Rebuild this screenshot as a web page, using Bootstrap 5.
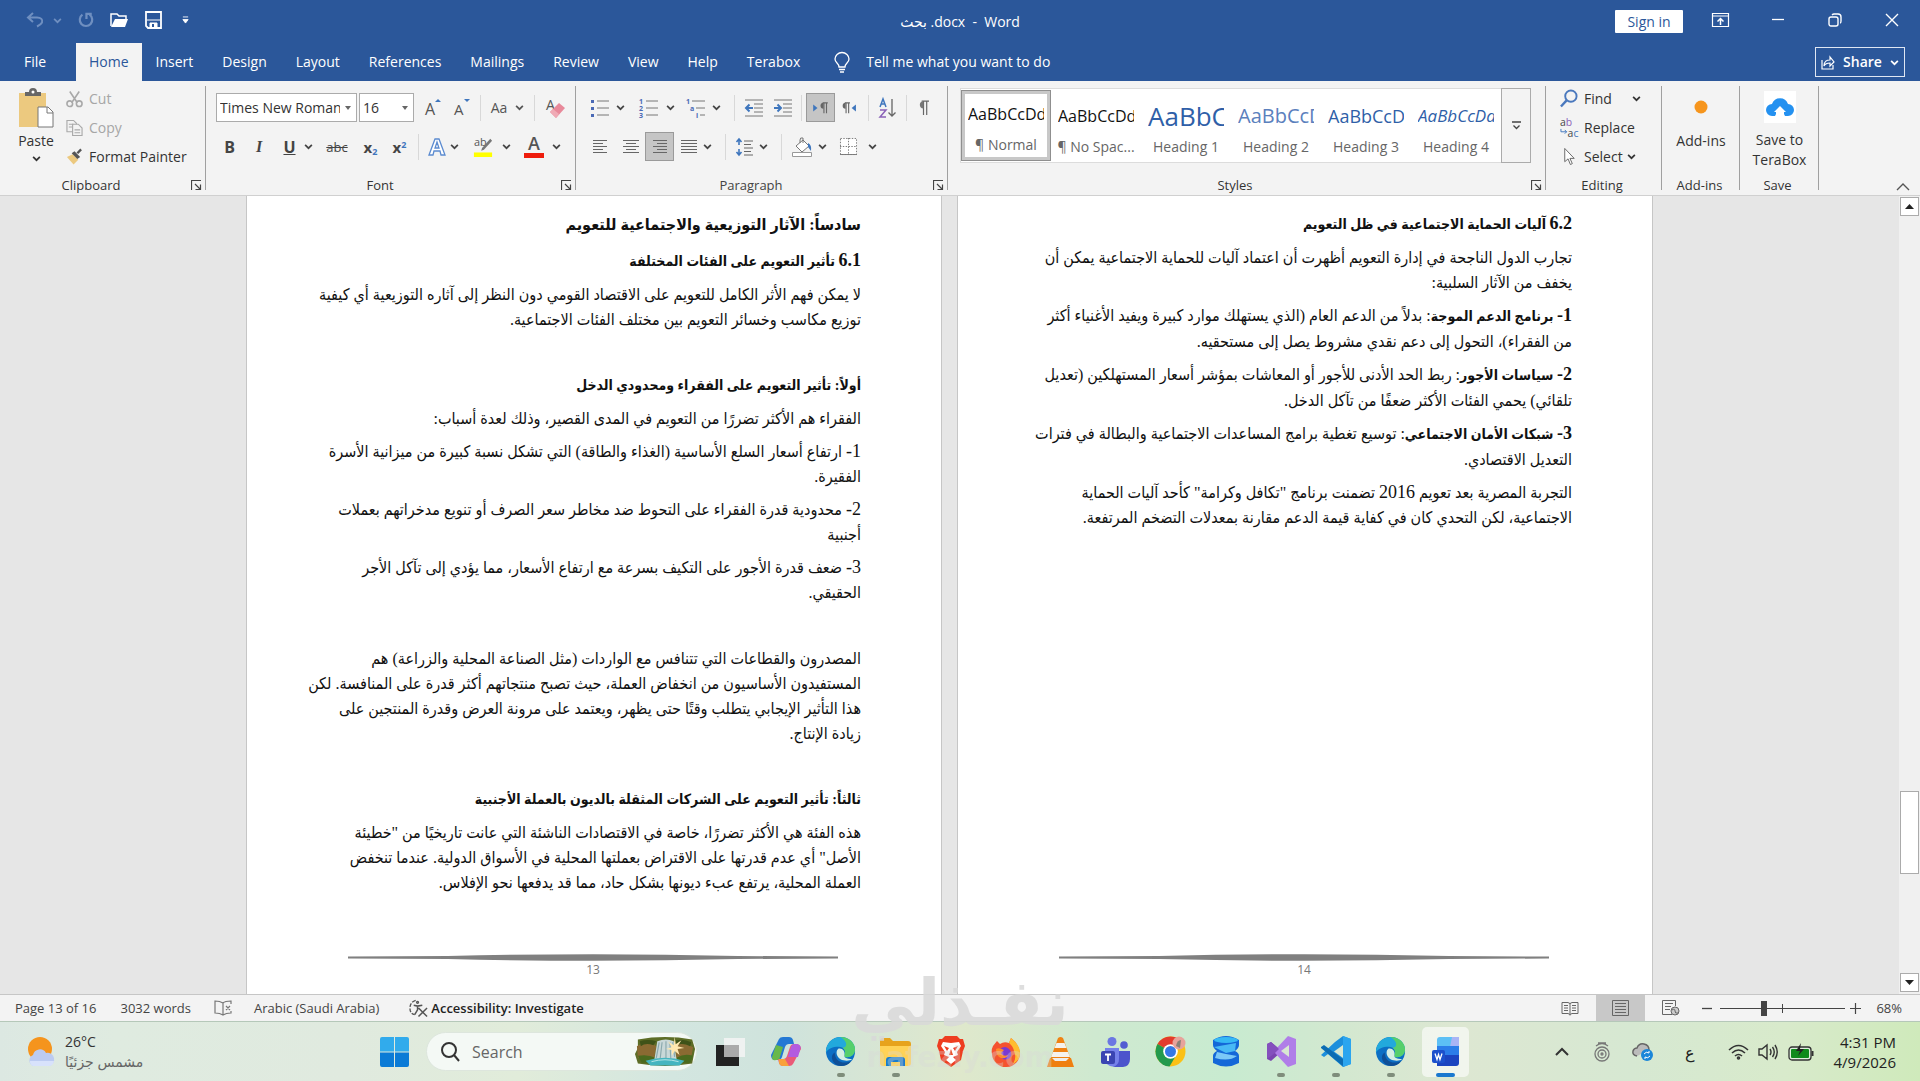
<!DOCTYPE html>
<html lang="en">
<head>
<meta charset="utf-8">
<meta name="viewport" content="width=device-width, initial-scale=1">
<title>بحث .docx - Word</title>
<link href="https://cdn.jsdelivr.net/npm/bootstrap@5.3.0/dist/css/bootstrap.min.css" rel="stylesheet">
<style>
:root{--wd-blue:#2b579a;--wd-ribbon:#f3f3f3;--wd-line:#a0a0a0;--wd-ink:#444}
body{font-family:"Open Sans","DejaVu Sans",sans-serif;font-size:14px;line-height:20px;color:#333;overflow:hidden}
button{background:none;border:0;padding:0;color:inherit;font-size:inherit;line-height:inherit}
svg{display:block;flex:none;overflow:visible}
.titlebar{background:var(--wd-blue);height:43px}
.titlebar .side{flex:1 1 0}
.qat{gap:16px;height:40px}
.qat .first-tool{margin-left:25px}
.signin{background:#fff;color:var(--wd-blue);height:23px;width:68px;border-radius:1px;line-height:22px;margin-right:9px}
.wincap{width:57px;height:38px}
.menubar{background:var(--wd-blue);height:38px}
.menubar .nav-link{color:#fff;padding:0 15px 0 14px;height:38px;line-height:38px;border-radius:0}
.menubar .file-tab{width:76px;padding:0 0 0 24px}
.menubar .nav-link.active{background:var(--wd-ribbon);color:var(--wd-blue);padding:0 13px}
.tellbox{padding-left:19px}
.tellme{background:transparent;border:0;color:#fff;width:220px;padding:0;outline:0}
.tellme::placeholder{color:#fff;opacity:1}
.share-btn{border:1px solid #dfe7f3;height:30px;width:90px;color:#fff;font-weight:600;margin-right:15px}
.ribbon{background:var(--wd-ribbon);height:115px;border-bottom:1px solid #d0d0d0}
.rgroup{position:relative;padding-top:3px}
.rgroup::after{content:"";position:absolute;right:0;top:5px;height:104px;width:1px;background:var(--wd-line)}
.rlabel{font-size:13px;line-height:18px;text-align:center;margin-top:auto;padding-bottom:1px;position:relative}
.rlabel .launch{position:absolute;right:4px;top:4px}
.rlist button{height:29px;gap:6px}
.rrow{height:29px}
.rrows{padding-top:9px;gap:10px}
.t{height:29px}
.w27{width:27px}.w29{width:29px}.w32{width:32px}.w36{width:36px}.w45{width:45px}.car{width:14px}
.on{background:#c5c5c5;outline:1px solid #9a9a9a;outline-offset:-1px}
.vsep{width:1px;height:26px;background:#d8d8d8;margin:0 4px}
.rsel{height:29px;border:1px solid #ababab;border-radius:0;font-size:14px;line-height:20px;padding:2px 16px 2px 3px;background-position:right 4px center;background-size:8px 8px;color:#333;
--bs-form-select-bg-img:url("data:image/svg+xml,%3csvg xmlns='http://www.w3.org/2000/svg' viewBox='0 0 8 8'%3e%3cpath fill='%23666' d='M1 2h6L4 6z'/%3e%3c/svg%3e")}
.rsel.fname{width:141px;text-overflow:clip}
.rsel.fsize{width:55px}
.gallery{height:75px;background:#fff;border:1px solid #dcdcdc;border-right:0}
.gitem{width:90px;height:71px;margin-top:1px;padding:0 7px;overflow:hidden;white-space:nowrap;text-align:left}
.gitem.sel{border:4px solid #c8c8c8;outline:1px solid #8f8f8f;outline-offset:-1px;padding:0 3px}
.gitem .pv{display:flex;align-items:center;height:36px;margin-top:4px;color:#111;font-size:16px;overflow:hidden}
.gitem .nm{display:block;text-align:center;color:#666;margin:3px -5px 0}
.gitem.sel .pv{margin-top:0}
.gitem .h1p{font-size:26px;color:#2f5fa8}.gitem .h2p{font-size:20px;color:#5b80bd}
.gitem .h3p{font-size:18px;color:#2f5fa8}.gitem .h4p{font-size:17px;color:#2f5fa8;font-style:italic}
.gmore{width:30px;height:75px;border:1px solid #ababab}
.workspace{background:#e6e6e6;min-height:0}
.sheet{background:#fff;width:696px;border:1px solid #c6c6c6;border-width:0 1px;padding:12px 80px 0 30px;color:#111;
font-family:"Liberation Serif","DejaVu Sans Condensed","DejaVu Sans",serif;font-size:16px;line-height:25px}
.sheet-first{padding-top:16px}
.sheet p,.sheet h2,.sheet h3{margin:0 0 8px;white-space:nowrap;line-height:25px}
.sheet h3{font-size:14px;font-weight:700}
.sheet h2{font-size:16px;font-weight:700;margin-bottom:12px}
.sheet b{font-size:14px}
.dg{font-size:18px;line-height:20px}
.foot{margin-top:auto;padding-bottom:15px;margin-left:48px;text-align:center;font-family:"Open Sans",sans-serif;font-size:12px;line-height:18px;color:#777}
.foot svg{margin:0 auto;width:490px}
.vscroll{width:21px;background:#f0f0f0}
.vscroll button{width:19px;height:19px;border:1px solid #ababab;background:#fff;margin:1px 0 0}
.vthumb{width:19px;height:83px;border:1px solid #ababab;background:#fff}
.statusbar{background:#f3f3f3;height:28px;border-top:1px solid #c6c6c6;border-bottom:1px solid #b5c8b9;font-size:13px;line-height:26px;color:#444}
.statusbar .viewon{background:#c8c8c8;width:49px;height:26px}
.zoomer{-webkit-appearance:none;appearance:none;width:125px;height:18px;margin:0;background:linear-gradient(#444,#444) 0 9px/100% 1px no-repeat,linear-gradient(#444,#444) 50% 5px/1px 9px no-repeat}
.zoomer::-webkit-slider-thumb{-webkit-appearance:none;width:6px;height:15px;background:#444}
.taskbar{height:59px;background:linear-gradient(90deg,#dce8e2 0,#dfebe0 6%,#e0eadf 18%,#e1ecda 27%,#d3e6e0 35%,#cfe3dc 41%,#dfe8cc 50%,#cfe9d0 57%,#c8ebd0 64%,#d3e8d0 70%,#dde7d2 76%,#d6e8d2 85%,#d8eacb 93%,#cfeabb 100%)}
.weather{width:367px;padding-left:26px;gap:10px}
.tb{width:55px;height:50px;position:relative}
.tb.run::after{content:"";position:absolute;left:24px;bottom:0;width:8px;height:4px;border-radius:2px;background:#7f8d7b}
.tb.cur{background:rgba(255,255,255,.6);width:47px;margin:0 4px;border-radius:5px}
.tb.cur::after{left:14px;width:19px;background:#1a78cf}
.searchbox{width:271px;height:39px;background:#f4f9f5;border-radius:20px;border:1px solid #dde6dd;padding-left:14px;gap:12px}
.searchbox input{border:0;background:transparent;font-size:16px;flex:1 1 0;min-width:0;outline:0;padding:0}
.searchbox input::placeholder{color:#666;opacity:1}
.clock{margin-left:20px;font-size:15px}
.brandmark{position:absolute;left:0;right:0;bottom:0;height:118px;text-align:center;pointer-events:none;overflow:hidden;font-family:"DejaVu Sans",sans-serif;font-weight:700;color:#d9d9d9}
.brandmark div{font-size:64px;line-height:80px;height:78px;opacity:.85}
.brandmark span{font-size:28px;line-height:34px;opacity:.35}
</style>
<script src="https://cdn.jsdelivr.net/npm/bootstrap@5.3.0/dist/js/bootstrap.bundle.min.js"></script>
</head>
<body class="vh-100 d-flex flex-column position-relative">
<svg width="0" height="0" class="position-absolute" aria-hidden="true">
<symbol id="car" viewBox="0 0 8 8"><path d="M1 2.5l3 3 3-3" fill="none" stroke="currentColor" stroke-width="1.5"/></symbol>
<symbol id="lau" viewBox="0 0 11 11"><path d="M.5 10V.5H10M4 4l5 5M9.500 4.500v5h-5" fill="none" stroke="#444" stroke-width="1.2"/></symbol>
<symbol id="edge" viewBox="0 0 32 32"><circle cx="16" cy="16" r="15" fill="#0d6fc4"/><path d="M1 15C2 6 9 1 16 1c9 0 15 6 15 13 0 5-4 8-8 8-3 0-4-1-3-3 2-3 0-8-6-8C8 11 3 13 1 17z" fill="#22a9dc"/><path d="M16 1c9 0 15 6 15 13 0 5-4 8-8 8-3 0-4-1-3-3 1-2 1-5-2-7 5 0 6-6-2-11z" fill="#56cf6b"/><path d="M10 17c0 8 7 13 17 9-4 5-10 6-15 4-5-3-7-10-2-13z" fill="#0f4f96"/><path d="M14 13c-3 2-3 8 2 11 4 2 9 2 12 0-5-1-9-1-8-5 1-3-2-7-6-6z" fill="#d6eee4"/></symbol>
</svg>

<header class="titlebar d-flex text-white">
  <div class="side d-flex align-items-center qat">
    <button class="first-tool d-flex align-items-center gap-2" aria-label="Undo"><svg width="20" height="16" viewBox="0 0 20 16" fill="none" stroke="#6f8fc0" stroke-width="2"><path d="M8 1L3 5.500 8 10M3 5.500h9c4 0 6 2 5 5-1 2-3 3-5 4"/></svg><svg width="9" height="9" style="color:#6f8fc0"><use href="#car"/></svg></button>
    <button aria-label="Redo"><svg width="16" height="16" viewBox="0 0 18 18" fill="none" stroke="#6f8fc0" stroke-width="2.500"><path d="M5 3A7 7 0 1 0 13 3M9.500 8V2h6"/></svg></button>
    <button aria-label="Open"><svg width="19" height="18" viewBox="0 0 19 18"><path d="M1 15V3h6l2 2h7v3" fill="none" stroke="#fff" stroke-width="1.500"/><path d="M1 16L5 8h13l-3 8z" fill="#fff"/></svg></button>
    <button aria-label="Save"><svg width="17" height="18" viewBox="0 0 17 18"><path d="M1 1h15v16H3l-2-2z" fill="none" stroke="#fff" stroke-width="1.800"/><path d="M2 9h13M5 17v-5h7v5z" stroke="#fff" fill="#fff"/><path d="M7 13h2v3H7z" fill="#2b579a"/></svg></button>
    <button class="ms-1" aria-label="Customize toolbar"><svg width="7" height="8" viewBox="0 0 8 9"><path d="M1 1h6M1 4h6L4 8z" stroke="#fff" fill="#fff"/></svg></button>
  </div>
  <div class="align-self-center"><span dir="ltr">بحث .docx&nbsp; -&nbsp; Word</span></div>
  <div class="side d-flex justify-content-end align-items-center pb-1">
    <button class="signin mt-1">Sign in</button>
    <button class="wincap d-grid" style="place-items:center" aria-label="Ribbon display"><svg width="17" height="14" viewBox="0 0 17 14" fill="none" stroke="#fff"><path d="M.5.5h16v13H.5zM1 3h15" stroke-width="1.200"/><path d="M8.500 12V6M5.500 8.500l3-3 3 3" stroke-width="1.500"/></svg></button>
    <button class="wincap d-grid" style="place-items:center" aria-label="Minimize"><svg width="14" height="14"><path d="M1 6.500h12" stroke="#fff" stroke-width="1.300"/></svg></button>
    <button class="wincap d-grid" style="place-items:center" aria-label="Restore"><svg width="14" height="14" viewBox="0 0 14 14" fill="none" stroke="#fff" stroke-width="1.400"><rect x="1" y="4" width="9" height="9" rx="2"/><path d="M4 2q1-1 2-1h4q3 0 3 3v4q0 2-1 2"/></svg></button>
    <button class="wincap d-grid" style="place-items:center" aria-label="Close"><svg width="14" height="14"><path d="M1 1l12 12M13 1L1 13" stroke="#fff" stroke-width="1.400"/></svg></button>
  </div>
</header>

<nav class="menubar d-flex align-items-center">
  <div class="nav flex-nowrap">
    <a class="nav-link file-tab" href="#">File</a><a class="nav-link active" href="#">Home</a><a class="nav-link" href="#">Insert</a><a class="nav-link" href="#">Design</a><a class="nav-link" href="#">Layout</a><a class="nav-link" href="#">References</a><a class="nav-link" href="#">Mailings</a><a class="nav-link" href="#">Review</a><a class="nav-link" href="#">View</a><a class="nav-link" href="#">Help</a><a class="nav-link" href="#">Terabox</a>
  </div>
  <label class="tellbox d-flex align-items-center gap-3"><svg width="16" height="21" viewBox="0 0 16 21" fill="none" stroke="#fff" stroke-width="1.300"><path d="M5 15c0-4-4-4-4-8a7 6.500 0 0 1 14 0c0 4-4 4-4 8zM5 17.500h6M6 20h4"/></svg><input class="tellme" placeholder="Tell me what you want to do" aria-label="Tell me what you want to do"></label>
  <button class="share-btn ms-auto d-flex align-items-center justify-content-center gap-2"><svg width="14" height="15" viewBox="0 0 14 15" fill="none" stroke="#fff" stroke-width="1.200"><path d="M1 5v9h11v-4M3 11c0-5 3-6 6-6V2l4 5-4 4V8C6 8 4 9 3 11z"/></svg>Share<svg width="9" height="9"><use href="#car"/></svg></button>
</nav>

<section class="ribbon d-flex" aria-label="Ribbon">
  <div class="rgroup d-flex flex-column" style="width:206px">
    <div class="d-flex rlist">
      <button class="d-flex flex-column align-items-center h-auto" style="width:66px;padding-left:6px;gap:3px"><svg class="mt-1" width="36" height="40" viewBox="0 0 36 40"><path d="M1 5h27v34H1z" fill="#ecc97f"/><path d="M7 8V4h4q0-4 4-4t4 4h4v4z" fill="#666"/><circle cx="15" cy="4" r="1.500" fill="#fff"/><path d="M20 19h10l5 5v15H20z" fill="#fff" stroke="#777"/><path d="M29 19v6h6" fill="none" stroke="#777"/></svg><span>Paste</span><svg width="9" height="9"><use href="#car"/></svg></button>
      <div class="d-flex flex-column">
        <button class="d-flex align-items-center" style="color:#a6a6a6" disabled><svg width="17" height="18" viewBox="0 0 18 18" fill="none" stroke="#a9a9a9" stroke-width="1.700"><path d="M4 1l8 12M14 1L6 13"/><circle cx="4" cy="14" r="3"/><circle cx="14" cy="14" r="3"/></svg>Cut</button>
        <button class="d-flex align-items-center" style="color:#a6a6a6" disabled><svg width="17" height="18" viewBox="0 0 18 18" fill="#f3f3f3" stroke="#a9a9a9" stroke-width="1.200"><path d="M1 1h7l3 3v9H1zM3 5h5M3 8h5"/><path d="M7 5h6l4 4v8H7zM9 11h6M9 14h6"/></svg>Copy</button>
        <button class="d-flex align-items-center"><svg width="17" height="18" viewBox="0 0 18 18"><path d="M1 9l6-3 6 6-5 5z" fill="#ecc97f"/><path d="M6 5l3-2 6 6-3 2z" fill="#555"/><path d="M12 5l4-4" stroke="#555" stroke-width="2.500"/></svg>Format Painter</button>
      </div>
    </div>
    <div class="rlabel" style="padding-right:24px">Clipboard<svg class="launch" width="11" height="11"><use href="#lau"/></svg></div>
  </div>

  <div class="rgroup d-flex flex-column" style="width:370px">
    <div class="rrows d-flex flex-column" style="padding-left:10px">
      <div class="rrow d-flex align-items-center">
        <select class="form-select rsel fname" aria-label="Font"><option>Times New Roman</option></select>
        <select class="form-select rsel fsize me-1" style="margin-left:2px" aria-label="Font size"><option>16</option></select>
        <button class="t w29 d-grid" style="place-items:center" aria-label="Grow font"><svg width="18" height="20" viewBox="0 0 18 20"><text x="1" y="17" font-size="16" fill="#555">A</text><path d="M11 4l3-3 3 3z" fill="#3f76bd"/></svg></button>
        <button class="t w29 d-grid" style="place-items:center" aria-label="Shrink font"><svg width="18" height="20" viewBox="0 0 18 20"><text x="1" y="17" font-size="15" fill="#555">A</text><path d="M11 1l3 3 3-3z" fill="#3f76bd"/></svg></button>
        <span class="vsep"></span>
        <button class="t w45 d-flex align-items-center justify-content-center gap-1" style="color:#555">Aa<svg class="ms-1" width="9" height="9"><use href="#car"/></svg></button>
        <span class="vsep"></span>
        <button class="t w32 d-grid" style="place-items:center" aria-label="Clear formatting"><svg width="19" height="20" viewBox="0 0 19 20"><text x="0" y="12" font-size="14" fill="#555">A</text><path d="M4 14l9-9 6 5-9 10z" fill="#e8899a"/><path d="M4 14l3-3 6 5-3 4z" fill="#f0aab5"/></svg></button>
      </div>
      <div class="rrow d-flex align-items-center" style="color:#444">
        <button class="t w27 fw-bold" style="font-size:16px">B</button><button class="t w32 fw-bold fst-italic" style="font-size:16px;font-family:'Liberation Serif',serif">I</button><button class="t w29 fw-bold text-decoration-underline" style="font-size:16px">U</button><button class="t car" aria-label="Underline styles"><svg width="9" height="9"><use href="#car"/></svg></button>
        <button class="t text-decoration-line-through" style="width:38px;font-size:13px">abc</button>
        <button class="t w29 fw-bold" style="font-size:15px">x<sub style="color:#3f76bd;font-size:9px">2</sub></button><button class="t w29 fw-bold" style="font-size:15px">x<sup style="color:#3f76bd;font-size:9px">2</sup></button>
        <span class="vsep"></span>
        <button class="t w27 d-grid" style="place-items:center" aria-label="Text effects"><svg width="18" height="20" viewBox="0 0 18 20"><path d="M1 18L7 2h4l6 16h-4l-1-4H6l-1 4zM7 11h4L9 5z" fill="#fff" stroke="#5b8bd0" stroke-width="1.300"/></svg></button><button class="t car" aria-label="Effects menu"><svg width="9" height="9"><use href="#car"/></svg></button>
        <button class="t d-grid" style="width:38px;place-items:center" aria-label="Highlight"><svg width="20" height="24" viewBox="0 0 22 24"><text x="1" y="11" font-size="12" fill="#555">ab</text><path d="M21 5l-9 10-3 1 1-3 9-10z" fill="#777"/><path d="M1 18h20v5H1z" fill="#ffff00"/></svg></button><button class="t car" aria-label="Highlight colors"><svg width="9" height="9"><use href="#car"/></svg></button>
        <button class="t w36 d-grid" style="place-items:center" aria-label="Font color"><svg width="20" height="24" viewBox="0 0 20 24"><text x="4" y="15" font-size="18" font-weight="600" fill="#555">A</text><path d="M0 18h20v5H0z" fill="#ee1c0c"/></svg></button><button class="t car" aria-label="Font colors"><svg width="9" height="9"><use href="#car"/></svg></button>
      </div>
    </div>
    <div class="rlabel" style="padding-right:22px">Font<svg class="launch" width="11" height="11"><use href="#lau"/></svg></div>
  </div>

  <div class="rgroup d-flex flex-column" style="width:372px;color:#444">
    <div class="rrows d-flex flex-column" style="padding-left:8px">
      <div class="rrow d-flex align-items-center">
        <button class="t w32 d-grid" style="place-items:center" aria-label="Bullets"><svg width="18" height="18" viewBox="0 0 18 18"><path d="M6 2h12M6 9h12M6 16h12" stroke="#777"/><path d="M0 1h3v3H0zM0 8h3v3H0zM0 15h3v3H0z" fill="#4a69b5"/></svg></button><button class="t car" aria-label="Bullet library"><svg width="9" height="9"><use href="#car"/></svg></button>
        <button class="t w36 d-grid" style="place-items:center" aria-label="Numbering"><svg width="19" height="20" viewBox="0 0 19 20"><path d="M7 3h12M7 10h12M7 17h12" stroke="#777"/><g font-size="7" font-weight="700" fill="#4a69b5"><text x="0" y="6">1</text><text x="0" y="13">2</text><text x="0" y="20">3</text></g></svg></button><button class="t car" aria-label="Numbering library"><svg width="9" height="9"><use href="#car"/></svg></button>
        <button class="t w32 d-grid" style="place-items:center" aria-label="Multilevel list"><svg width="20" height="20" viewBox="0 0 20 20"><path d="M6 3h13M10 10h9M14 17h5" stroke="#777"/><g font-size="7" font-weight="700" fill="#4a69b5"><text x="0" y="6">1</text><text x="4" y="13">a</text><text x="10" y="20">i</text></g></svg></button><button class="t car" aria-label="List library"><svg width="9" height="9"><use href="#car"/></svg></button>
        <span class="vsep ms-2"></span>
        <button class="t w29 d-grid" style="place-items:center" aria-label="Decrease indent"><svg width="18" height="18" viewBox="0 0 18 18"><path d="M0 1h18M9 5h9M9 9h9M9 13h9M0 17h18" stroke="#777"/><path d="M8 9H1M4.500 5.500L1 9l3.500 3.500" stroke="#3f76bd" stroke-width="2" fill="none"/></svg></button>
        <button class="t w29 d-grid" style="place-items:center" aria-label="Increase indent"><svg width="18" height="18" viewBox="0 0 18 18"><path d="M0 1h18M9 5h9M9 9h9M9 13h9M0 17h18" stroke="#777"/><path d="M0 9h7M3.500 5.500L7 9l-3.500 3.500" stroke="#3f76bd" stroke-width="2" fill="none"/></svg></button>
        <span class="vsep"></span>
        <button class="t w29 d-grid on" style="place-items:center" aria-label="Left-to-right"><svg width="15" height="12" viewBox="0 0 17 14"><path d="M0 3l5 4-5 4z" fill="#3f76bd"/><path d="M11 1h6M12.500 1v12M15.500 1v12" stroke="#666" stroke-width="1.300"/><path d="M12 1a3.500 3.500 0 0 0 0 7z" fill="#666"/></svg></button>
        <button class="t w29 d-grid" style="place-items:center" aria-label="Right-to-left"><svg width="15" height="12" viewBox="0 0 17 14"><path d="M16 3l-5 4 5 4z" fill="#3f76bd"/><path d="M3 1h6M4.500 1v12M7.500 1v12" stroke="#666" stroke-width="1.300"/><path d="M4 1a3.500 3.500 0 0 0 0 7z" fill="#666"/></svg></button>
        <span class="vsep"></span>
        <button class="t w29 d-grid" style="place-items:center" aria-label="Sort"><svg width="18" height="20" viewBox="0 0 18 20" fill="none"><path d="M1 9l3-8 3 8M2 6h4" stroke="#3f76bd" stroke-width="1.500"/><path d="M1 12h6l-6 7h6" stroke="#8a62b8" stroke-width="1.500"/><path d="M13 1v17M9.500 14.500L13 18l3.500-3.500" stroke="#666" stroke-width="1.300"/></svg></button>
        <span class="vsep"></span>
        <button class="t d-grid" style="width:24px;place-items:center" aria-label="Show marks"><svg width="11" height="16" viewBox="0 0 12 17"><path d="M4 1h8M6 1v15M9.500 1v15" stroke="#666" stroke-width="1.300"/><path d="M6 1a4 4 0 0 0 0 8z" fill="#777"/></svg></button>
      </div>
      <div class="rrow d-flex align-items-center">
        <button class="t w32 d-grid" style="place-items:center" aria-label="Align left"><svg width="16" height="13"><path d="M1 .5h14M1 3.500h10M1 6.500h14M1 9.500h10M1 12.500h14" stroke="#666"/></svg></button>
        <button class="t w29 d-grid" style="place-items:center" aria-label="Center"><svg width="16" height="13"><path d="M0 .5h16M3 3.500h10M0 6.500h16M3 9.500h10M0 12.500h16" stroke="#666"/></svg></button>
        <button class="t w29 d-grid on" style="place-items:center" aria-label="Align right"><svg width="16" height="13"><path d="M1 .5h14M5 3.500h10M1 6.500h14M5 9.500h10M1 12.500h14" stroke="#666"/></svg></button>
        <button class="t w29 d-grid" style="place-items:center" aria-label="Justify"><svg width="16" height="13"><path d="M0 .5h16M0 3.500h16M0 6.500h16M0 9.500h16M0 12.500h16" stroke="#666"/></svg></button><button class="t car" aria-label="Justify options"><svg width="9" height="9"><use href="#car"/></svg></button>
        <span class="vsep ms-2"></span>
        <button class="t w29 d-grid" style="place-items:center" aria-label="Line spacing"><svg width="17" height="18" viewBox="0 0 17 18"><path d="M8 3h9M8 6.500h7M8 10h9M8 13.500h7M8 17h9" stroke="#666"/><path d="M3 1v6M3 11v6M.5 4L3 1l2.500 3M.5 14L3 17l2.500-3" stroke="#3f76bd" stroke-width="1.600" fill="none"/></svg></button><button class="t car" aria-label="Spacing options"><svg width="9" height="9"><use href="#car"/></svg></button>
        <span class="vsep ms-2"></span>
        <button class="t w32 d-grid" style="place-items:center" aria-label="Shading"><svg width="21" height="20" viewBox="0 0 21 20"><path d="M4 9l7-6 6 6-7 6z" fill="#fff" stroke="#777"/><path d="M8 6V3q0-3 3-2v5" fill="none" stroke="#777"/><path d="M16 6q4 2 3 8l-3-4z" fill="#3f76bd"/><path d="M.5 15.500h19v4H.5z" fill="#fff" stroke="#999"/></svg></button><button class="t car" aria-label="Shading colors"><svg width="9" height="9"><use href="#car"/></svg></button>
        <button class="t w32 d-grid" style="place-items:center" aria-label="Borders"><svg width="17" height="17" viewBox="0 0 18 18"><path d="M.5.500h17v17H.5zM9 0v18M0 9h18" fill="#fff" stroke="#777" stroke-dasharray="1.500 1.500"/><path d="M0 17.500h18" stroke="#777"/></svg></button><button class="t car ms-1" aria-label="Border options"><svg width="9" height="9"><use href="#car"/></svg></button>
      </div>
    </div>
    <div class="rlabel" style="padding-right:22px">Paragraph<svg class="launch" width="11" height="11"><use href="#lau"/></svg></div>
  </div>

  <div class="rgroup d-flex flex-column" style="width:598px">
    <div class="d-flex" style="padding:4px 0 0 12px">
      <div class="gallery d-flex">
        <button class="gitem sel"><span class="pv">AaBbCcDd</span><span class="nm">¶ Normal</span></button>
        <button class="gitem"><span class="pv">AaBbCcDd</span><span class="nm">¶ No Spac...</span></button>
        <button class="gitem"><span class="pv h1p">AaBbCc</span><span class="nm">Heading 1</span></button>
        <button class="gitem"><span class="pv h2p">AaBbCcD</span><span class="nm">Heading 2</span></button>
        <button class="gitem"><span class="pv h3p">AaBbCcD</span><span class="nm">Heading 3</span></button>
        <button class="gitem"><span class="pv h4p">AaBbCcDd</span><span class="nm">Heading 4</span></button>
      </div>
      <button class="gmore d-grid" style="place-items:center" aria-label="More styles"><svg width="9" height="10" viewBox="0 0 9 10"><path d="M0 1h9M1.500 4.500l3 3 3-3" fill="none" stroke="#444" stroke-width="1.300"/></svg></button>
    </div>
    <div class="rlabel" style="padding-right:24px">Styles<svg class="launch" width="11" height="11"><use href="#lau"/></svg></div>
  </div>

  <div class="rgroup d-flex flex-column" style="width:116px">
    <div class="d-flex flex-column align-items-start rlist" style="padding-left:14px">
      <button class="d-flex align-items-center"><svg width="18" height="19" viewBox="0 0 19 19" fill="none" stroke="#4a78bd"><circle cx="11.500" cy="7" r="6" stroke-width="2"/><path d="M7 11.500L1 18" stroke-width="2.500"/></svg>Find<svg style="margin-left:14px" width="9" height="9"><use href="#car"/></svg></button>
      <button class="d-flex align-items-center"><svg width="18" height="20" viewBox="0 0 19 20"><g font-size="11"><text x="0" y="8" fill="#444">a<tspan fill="#8a62b8">b</tspan></text><text x="8" y="19" fill="#444">a<tspan fill="#3f76bd">c</tspan></text></g><path d="M1 11v3h6M5 12l2 2-2 2" fill="none" stroke="#3f76bd"/></svg>Replace</button>
      <button class="d-flex align-items-center"><svg width="18" height="19" viewBox="0 0 19 19"><path d="M5 1v14l3.500-3 2.500 6 2-1-2.500-5.500H15z" fill="#fff" stroke="#666"/></svg>Select<svg style="margin-left:-2px" width="9" height="9"><use href="#car"/></svg></button>
    </div>
    <div class="rlabel" style="padding-right:4px">Editing</div>
  </div>
  <div class="rgroup d-flex flex-column" style="width:78px">
    <button class="d-flex flex-column align-items-center" style="padding-top:16px;gap:17px"><svg width="14" height="14"><circle cx="7" cy="7" r="6.500" fill="#f6951d"/></svg><span>Add-ins</span></button>
    <div class="rlabel" style="padding-right:3px">Add-ins</div>
  </div>
  <div class="rgroup d-flex flex-column" style="width:79px">
    <button class="d-flex flex-column align-items-center" style="padding-top:7px;gap:7px"><svg width="32" height="32"><path d="M0 0h32v32H0z" fill="#fff"/><path d="M8 25a6 6 0 0 1 0-12 8.500 8.500 0 0 1 16 0 6 6 0 0 1 0 12h-3l-1-2V21h2l-6-6-6 6h2v2l-1 2z" fill="#2491f0"/></svg><span>Save to<br>TeraBox</span></button>
    <div class="rlabel" style="padding-right:4px">Save</div>
  </div>
  <button class="ms-auto align-self-end pb-1" style="padding-right:10px" aria-label="Collapse ribbon"><svg width="14" height="9"><path d="M1 8l6-6 6 6" fill="none" stroke="#555" stroke-width="1.400"/></svg></button>
</section>

<main class="workspace d-flex flex-fill">
  <div class="d-flex flex-fill justify-content-center" style="gap:15px">
    <article class="sheet sheet-first d-flex flex-column" dir="rtl" lang="ar">
      <h2>سادساً: الآثار التوزيعية والاجتماعية للتعويم</h2>
      <h3><span class="dg">6.1</span> تأثير التعويم على الفئات المختلفة</h3>
      <p>لا يمكن فهم الأثر الكامل للتعويم على الاقتصاد القومي دون النظر إلى آثاره التوزيعية أي كيفية<br>توزيع مكاسب وخسائر التعويم بين مختلف الفئات الاجتماعية.</p>
      <p>&nbsp;</p>
      <h3>أولاً: تأثير التعويم على الفقراء ومحدودي الدخل</h3>
      <p>الفقراء هم الأكثر تضررًا من التعويم في المدى القصير، وذلك لعدة أسباب:</p>
      <p><span class="dg">1-</span> ارتفاع أسعار السلع الأساسية (الغذاء والطاقة) التي تشكل نسبة كبيرة من ميزانية الأسرة<br>الفقيرة.</p>
      <p><span class="dg">2-</span> محدودية قدرة الفقراء على التحوط ضد مخاطر سعر الصرف أو تنويع مدخراتهم بعملات<br>أجنبية</p>
      <p><span class="dg">3-</span> ضعف قدرة الأجور على التكيف بسرعة مع ارتفاع الأسعار، مما يؤدي إلى تآكل الأجر<br>الحقيقي.</p>
      <p>&nbsp;</p>
      <p>المصدرون والقطاعات التي تتنافس مع الواردات (مثل الصناعة المحلية والزراعة) هم<br>المستفيدون الأساسيون من انخفاض العملة، حيث تصبح منتجاتهم أكثر قدرة على المنافسة. لكن<br>هذا التأثير الإيجابي يتطلب وقتًا حتى يظهر، ويعتمد على مرونة العرض وقدرة المنتجين على<br>زيادة الإنتاج.</p>
      <p>&nbsp;</p>
      <h3>ثالثاً: تأثير التعويم على الشركات المثقلة بالديون بالعملة الأجنبية</h3>
      <p>هذه الفئة هي الأكثر تضررًا، خاصة في الاقتصادات الناشئة التي عانت تاريخيًا من "خطيئة<br>الأصل" أي عدم قدرتها على الاقتراض بعملتها المحلية في الأسواق الدولية. عندما تنخفض<br>العملة المحلية، يرتفع عبء ديونها بشكل حاد، مما قد يدفعها نحو الإفلاس.</p>
      <div class="foot"><svg height="7" viewBox="0 0 490 7" preserveAspectRatio="none"><path d="M0 2.500L100 2Q245-1.500 390 2l100 .5v2L390 5Q245 8.500 100 5L0 4.500z" fill="#808080"/></svg>13</div>
    </article>
    <article class="sheet d-flex flex-column" dir="rtl" lang="ar">
      <h3 class="mt-1"><span class="dg">6.2</span> آليات الحماية الاجتماعية في ظل التعويم</h3>
      <p>تجارب الدول الناجحة في إدارة التعويم أظهرت أن اعتماد آليات للحماية الاجتماعية يمكن أن<br>يخفف من الآثار السلبية:</p>
      <p><b><span class="dg">1-</span> برنامج الدعم الموجة</b>: بدلاً من الدعم العام (الذي يستهلك موارد كبيرة ويفيد الأغنياء أكثر<br>من الفقراء)، التحول إلى دعم نقدي مشروط يصل إلى مستحقيه.</p>
      <p><b><span class="dg">2-</span> سياسات الأجور</b>: ربط الحد الأدنى للأجور أو المعاشات بمؤشر أسعار المستهلكين (تعديل<br>تلقائي) يحمي الفئات الأكثر ضعفًا من تآكل الدخل.</p>
      <p><b><span class="dg">3-</span> شبكات الأمان الاجتماعي</b>: توسيع تغطية برامج المساعدات الاجتماعية والبطالة في فترات<br>التعديل الاقتصادي.</p>
      <p>التجربة المصرية بعد تعويم <span class="dg">2016</span> تضمنت برنامج "تكافل وكرامة" كأحد آليات الحماية<br>الاجتماعية، لكن التحدي كان في كفاية قيمة الدعم مقارنة بمعدلات التضخم المرتفعة.</p>
      <div class="foot"><svg height="7" viewBox="0 0 490 7" preserveAspectRatio="none"><path d="M0 2.500L100 2Q245-1.500 390 2l100 .5v2L390 5Q245 8.500 100 5L0 4.500z" fill="#808080"/></svg>14</div>
    </article>
  </div>
  <div class="vscroll d-flex flex-column align-items-center">
    <button class="d-grid" style="place-items:center" aria-label="Scroll up"><svg width="9" height="5"><path d="M0 5L4.500 0 9 5z" fill="#222"/></svg></button>
    <div class="vthumb mt-auto" style="margin-bottom:98px"></div>
    <button class="d-grid" style="place-items:center;margin-bottom:2px" aria-label="Scroll down"><svg width="9" height="5"><path d="M0 0l4.500 5L9 0z" fill="#222"/></svg></button>
  </div>
</main>

<footer class="statusbar d-flex align-items-center flex-shrink-0" style="padding-left:15px">
  <span>Page 13 of 16</span><span style="margin-left:24px">3032 words</span>
  <svg style="margin-left:23px" width="18" height="16" viewBox="0 0 18 16" fill="none" stroke="#777" stroke-width="1.200"><path d="M9 3Q6 1 1 1v12q5 0 8 2 3-2 8-2v-2M9 3v12M9 3q2-2 8-2v3M12 6l4 4M16 6l-4 4"/></svg>
  <span style="margin-left:22px">Arabic (Saudi Arabia)</span>
  <svg style="margin-left:30px" width="19" height="18" viewBox="0 0 20 18" fill="none" stroke="#555" stroke-width="1.400"><path d="M7 1Q1 3 1 9t5 7" stroke-dasharray="4 1.500"/><circle cx="9" cy="3" r="1"/><path d="M5 6l4 1 5-1M9 7v4l-3 5M10 9l9 9M19 9l-9 9" stroke-width="1.600"/></svg>
  <b style="font-weight:600;color:#222;margin-left:3px">Accessibility: Investigate</b>
  <div class="ms-auto d-flex align-items-center" style="padding-right:18px">
    <button aria-label="Read mode" style="margin-right:17px"><svg width="18" height="15" viewBox="0 0 18 15" fill="none" stroke="#666"><path d="M9 2v12.500M1 1.500h6l2 1 2-1h6v11h-6l-2 1-2-1H1zM3 4.500h4M3 7h4M3 9.500h4M11 4.500h4M11 7h4M11 9.500h4"/></svg></button>
    <button class="viewon d-grid" style="place-items:center" aria-label="Print layout"><svg width="17" height="16" fill="none" stroke="#666"><path d="M.5.500h16v15H.5zM3 3.500h11M3 6.500h11M3 9.500h11M3 12.500h11"/></svg></button>
    <button aria-label="Web layout" style="margin:0 22px 0 17px"><svg width="18" height="16" fill="none" stroke="#666"><path d="M10 14.500H.5V.500h13V6M3 3.500h8M3 6.500h6M3 9.500h5"/><circle cx="13" cy="11" r="4" fill="#ccc"/><path d="M10 10q3-2 3 1t3 2"/></svg></button>
    <button aria-label="Zoom out"><svg width="11" height="11"><path d="M0 5.500h10" stroke="#444" stroke-width="1.300"/></svg></button>
    <input class="zoomer" style="margin-left:7px" type="range" min="0" max="100" value="34" aria-label="Zoom">
    <button style="margin-left:5px" aria-label="Zoom in"><svg width="11" height="11"><path d="M0 5.500h11M5.500 0v11" stroke="#444" stroke-width="1.200"/></svg></button>
    <span style="margin-left:15px">68%</span>
  </div>
</footer>

<div class="taskbar d-flex align-items-center flex-shrink-0">
  <div class="weather d-flex align-items-center">
    <svg width="29" height="32" viewBox="0 0 29 32"><circle cx="14" cy="13" r="12" fill="#f5941d"/><path d="M7 30a6 6 0 0 1 0-11 7 7 0 0 1 13-2 6 6 0 0 1 3 13z" fill="#bccbf2"/><path d="M7 30a5 5 0 0 1-3-5h24q-1 5-5 5z" fill="#d8e2fb"/></svg>
    <div><div>26°C</div><div style="color:#666" lang="ar">مشمس جزئيًا</div></div>
  </div>
  <button class="tb d-grid" style="place-items:center" aria-label="Start"><svg width="29" height="30" viewBox="0 0 29 30"><path d="M0 2q0-2 2-2h12v14.500H0zM15 0h12q2 0 2 2v12.500H15z" fill="#31abec"/><path d="M0 15.500h14V30H2q-2 0-2-2zM15 15.500h14V28q0 2-2 2H15z" fill="#0b7bd6"/></svg></button>
  <label class="searchbox d-flex align-items-center ms-1"><svg width="19" height="20" viewBox="0 0 19 20" fill="none" stroke="#333" stroke-width="2"><circle cx="8" cy="8" r="7"/><path d="M13 13l5 6"/></svg><input placeholder="Search" aria-label="Search"><svg width="62" height="31" viewBox="0 0 64 31"><path d="M4 3q28-5 56 0l3 10-3 15q-28 5-56 0L1 18l3-6z" fill="#5d6d26"/><path d="M3 10q12-7 20 0l-2 12H4zM42 9q10-4 19 2l-2 11H44z" fill="#8a6a32"/><path d="M6 5q8-3 17 0l-3 4q-8-3-13 1zM43 4q9-2 16 2l-1 4q-8-4-14-1z" fill="#3f5218"/><path d="M4 20q10-2 18 2v5H8zM44 22q8-5 17-2l-3 7H45z" fill="#4a6a1e"/><path d="M24 5q9-4 17 0l3 19H21z" fill="#c9d8d8"/><path d="M26 6l-3 16M29 6l-2 17M33 5v18M37 6l1 17M40 6l2 15" stroke="#8aa9ad" stroke-width="1.200"/><path d="M12 25q20-6 40 0l-5 5H17z" fill="#45b5c0"/><path d="M18 26q14-4 28 0" stroke="#b8e6e8" fill="none"/><path d="M42 0l1 8 6-4-4 6 7 2-7 1 2 6-5-4-3 5v-6l-6-1 6-2-4-6 6 4z" fill="#ffe8b0"/></svg></label>
  <button class="tb d-grid" style="place-items:center;margin-left:6px" aria-label="Task view"><svg width="30" height="29"><path d="M0 8h23v21H0z" fill="#222"/><path d="M8 1h21v19H8z" fill="#f4f4f4" opacity=".85"/><path d="M8 8h15v12H8z" fill="#aaa"/></svg></button>
  <button class="tb d-grid" style="place-items:center" aria-label="Copilot"><svg width="30" height="29" viewBox="0 0 30 29"><path d="M8 2q1-2 4-2h6q3 0 4 3l1 4h-5q-3 0-4 3l-3 10q-1 3-4 3H4q-4 0-4-5z" fill="#2478d4"/><path d="M5 8L1 20q0 4 4 3h3l4-13z" fill="#68b84a"/><path d="M22 27q-1 2-4 2h-6q-3 0-4-3l-1-4h5q3 0 4-3l3-9q1-3 4-3h3q4 1 4 5z" fill="#ea5a78"/><path d="M23 7h3q5 1 3 6l-2 7h-10l3-10q1-3 3-3z" fill="#b35be0"/><path d="M8 22h6l4 7h-6q-3 0-4-3z" fill="#f9a13a"/></svg></button>
  <button class="tb run d-grid" style="place-items:center" aria-label="Edge"><svg width="31" height="31"><use href="#edge"/></svg></button>
  <button class="tb run d-grid" style="place-items:center" aria-label="File Explorer"><svg width="31" height="28" viewBox="0 0 31 28"><path d="M0 3q0-3 3-3h7l3 3h15q3 0 3 3v10H0z" fill="#e7a31d"/><path d="M0 8h31v17q0 3-3 3H3q-3 0-3-3z" fill="#ffd257"/><path d="M6 28v-6q0-3 3-3h13q3 0 3 3v6h-5v-4h-9v4z" fill="#1b7ccb"/></svg></button>
  <button class="tb d-grid" style="place-items:center" aria-label="Brave"><svg width="28" height="31" viewBox="0 0 28 31"><path d="M8 0h12l3 3h3l2 7-2 5-2 9-10 7-10-7-2-9-2-5 2-7h3z" fill="#ee3d20"/><path d="M6 6l8 1 8-1 2 4-4 6 1 3-5 2 3 3-5 4-5-4 3-3-5-2 1-3-4-6z" fill="#fff"/><path d="M7 10l5 2-2 3zM21 10l-5 2 2 3zM14 13l2 6h-4z" fill="#ee3d20"/></svg></button>
  <button class="tb d-grid" style="place-items:center" aria-label="Firefox"><svg width="30" height="30" viewBox="0 0 30 30"><path d="M2 9l4-5 3 3q4-3 9-1l2-5q8 6 9 15A14 13.500 0 0 1 1 17q-1-4 1-8z" fill="#f5532f"/><path d="M18 6l2-5q9 7 9 15 0 7-7 11 4-6 1-13-1-5-5-8z" fill="#ffbd2f"/><path d="M9 12q5-4 9 0 3 3 2 7-3 5-8 3-5-3-3-10z" fill="#7a3ad0"/><path d="M5 12q3-2 8 1l-3 3q2 4 7 2-2 4-7 3-5-2-5-9z" fill="#ff8a2a"/></svg></button>
  <button class="tb d-grid" style="place-items:center" aria-label="VLC"><svg width="27" height="30" viewBox="0 0 27 30"><path d="M11 1q2.500-2 5 0l8 22H3z" fill="#f08314"/><path d="M9.500 6h8l2 5h-12zM6 15h15l2 5H4z" fill="#f5f2ee"/><path d="M3 21h21l3 9H0z" fill="#ef7f10"/><path d="M5 21h17l-3 3H8z" fill="#eee"/></svg></button>
  <button class="tb d-grid" style="place-items:center" aria-label="Teams"><svg width="30" height="30" viewBox="0 0 30 30"><circle cx="11" cy="4.500" r="4.500" fill="#6b77e2"/><circle cx="23" cy="8" r="3.800" fill="#525bd2"/><path d="M4 11h14v18q-14 3-14-8z" fill="#7581ea"/><path d="M18 14h11v8q0 7-7 8H12q6-2 6-8z" fill="#4c54cc"/><rect y="14" width="14" height="13" rx="2" fill="#3a44b2"/><path d="M4 17.500h6M7 17.500V24" stroke="#fff" stroke-width="1.800"/></svg></button>
  <button class="tb d-grid" style="place-items:center" aria-label="Chrome"><svg width="31" height="31" viewBox="0 0 31 31"><circle cx="15.500" cy="15.500" r="15" fill="#fbc116"/><path d="M15.500 15.500L2.500 8a15 15 0 0 1 26 0z" fill="#e33b2e"/><path d="M15.500 15.500L2.500 8a15 15 0 0 0 12 22.500l6.500-11z" fill="#229a4c"/><circle cx="15.500" cy="15.500" r="7.300" fill="#fff"/><circle cx="15.500" cy="15.500" r="5.500" fill="#3578e5"/><circle cx="24" cy="7" r="6.500" fill="#e7a39b"/><path d="M21 10q1-6 5-6l-1 8z" fill="#8a8078"/></svg></button>
  <button class="tb d-grid" style="place-items:center" aria-label="Azure Data"><svg width="26" height="31" viewBox="0 0 26 31"><path d="M0 4q13-8 26 0v5q0 3-4 6 4 2 4 5v7q-13 7-26 0v-7q0-3 4-5-4-3-4-6z" fill="#1468d8"/><ellipse cx="13" cy="4" rx="12" ry="3" fill="#36b9f4"/><path d="M1 11l22-4-1 8-9 2z" fill="#48b9f5"/><path d="M4 16l9 2 11 2q-8 6-22 2z" fill="#7cc8f7"/></svg></button>
  <button class="tb run d-grid" style="place-items:center" aria-label="Visual Studio"><svg width="30" height="31" viewBox="0 0 30 31"><path d="M1 8l4-2 18 15V9L5 25l-4-2V8zM5 12v7l4-3.500z" fill="#7a45b0" fill-rule="evenodd"/><path d="M22 0l8 3v25l-8 3L9 17v-3z" fill="#b07ee8"/><path d="M23 9v12l-8-6z" fill="#d9e8d2"/><path d="M1 8l4-2 8 7-4 4-8 6z" fill="#8450bd"/></svg></button>
  <button class="tb run d-grid" style="place-items:center" aria-label="VS Code"><svg width="30" height="31" viewBox="0 0 30 31"><path d="M22 0l8 3v25l-8 3L7 18l-4 3-3-2 14-13z" fill="#1c8fdc"/><path d="M0 11l3-2 20 15v7L0 12z" fill="#0c6cb3"/><path d="M22 9v13l-9-6.500z" fill="#d9e8d2"/><path d="M22 0l8 3v25l-8 3z" fill="#2ba5ef"/></svg></button>
  <button class="tb run d-grid" style="place-items:center" aria-label="Edge window"><svg width="31" height="31"><use href="#edge"/></svg></button>
  <button class="tb run cur d-grid" style="place-items:center" aria-label="Word"><svg width="27" height="29" viewBox="0 0 27 29"><path d="M5 3q0-3 3-3h19v10H5z" fill="#5cc0f5"/><path d="M20 0h7v10h-9z" fill="#a9b4f5"/><path d="M5 9h22v10H5z" fill="#2b7de9"/><path d="M5 18h22v8q0 3-3 3H5z" fill="#1b44c0"/><rect y="13" width="13" height="13" rx="2" fill="#1c50cc"/><path d="M3 16.500l2 6 1.500-5 1.500 5 2-6" fill="none" stroke="#fff" stroke-width="1.300"/></svg></button>
  <div class="ms-auto d-flex align-items-center" style="padding-right:24px;color:#222">
    <svg width="14" height="9"><path d="M1 8l6-6 6 6" fill="none" stroke="#333" stroke-width="2"/></svg>
    <svg style="margin-left:24px" width="18" height="20" viewBox="0 0 18 20" fill="none" stroke="#777" stroke-width="1.300"><circle cx="9" cy="12" r="7"/><circle cx="9" cy="12" r="4"/><circle cx="9" cy="12" r="1"/><path d="M3 4q6-5 12 0M5 1h8"/></svg>
    <svg style="margin-left:21px" width="22" height="19" viewBox="0 0 22 19"><path d="M5 14Q0 13 1 9q1-3 4-3 2-5 7-4 5 1 5 6" fill="#bbb" stroke="#666" stroke-width="1.500"/><circle cx="15" cy="13" r="6" fill="#1a86d9"/><path d="M12 12q2-3 5-1v-2M18 14q-2 3-5 1v2" fill="none" stroke="#fff"/></svg>
    <span style="margin:0 33px 0 31px;font-size:16px">ع</span>
    <svg width="21" height="16" viewBox="0 0 21 16" fill="none" stroke="#333" stroke-width="1.600"><path d="M1 6q9.500-9 19 0M4 9q6.500-6 13 0M7 12q3.500-3 7 0"/><circle cx="10.500" cy="14" r="1"/></svg>
    <svg style="margin-left:9px" width="20" height="18" viewBox="0 0 20 18" fill="none" stroke="#333" stroke-width="1.400"><path d="M1 6h3l5-4v14l-5-4H1zM12 6q2 3 0 6M14.500 4q3.500 5 0 10M17 2q4.500 7 0 14"/></svg>
    <svg style="margin-left:10px" width="26" height="18" viewBox="0 0 26 18"><rect x="1" y="4" width="22" height="13" rx="3" fill="#dfeede" stroke="#333" stroke-width="1.300"/><rect x="3" y="6" width="18" height="9" rx="1" fill="#0f8a1c"/><path d="M24.500 8v5" stroke="#333" stroke-width="2"/><path d="M13 0L8 8h4l-2 5 6-7h-4z" fill="#222"/></svg>
    <div class="text-end clock"><div>4:31 PM</div><div>4/9/2026</div></div>
  </div>
</div>
<div class="brandmark" lang="ar"><div>نفـذلي</div><span>nafezly.com</span></div>
</body>
</html>
